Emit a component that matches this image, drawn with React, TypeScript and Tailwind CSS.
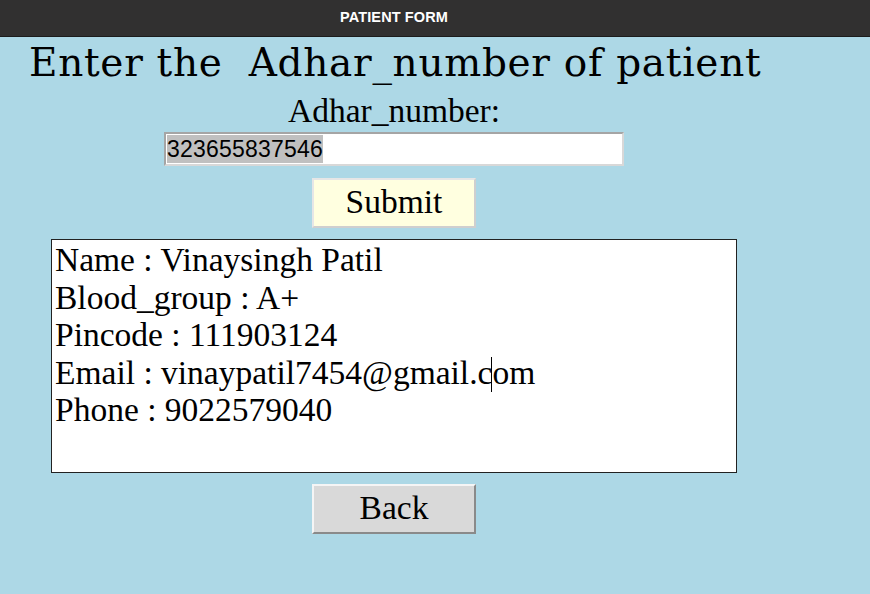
import React from "react";

export default function App() {
  const serif = { fontFamily: '"Liberation Serif", "Times New Roman", serif' };
  return (
    <div className="w-[870px] h-[594px] bg-[#add8e6] flex flex-col overflow-hidden">
      <div
        className="h-[37px] shrink-0 bg-[#313030] border-b border-[#1c1c1c] flex items-center justify-center pr-[82px] text-white font-bold text-[14.5px] tracking-[0.1px]"
        style={{ fontFamily: '"Liberation Sans", Arial, sans-serif' }}
      >
        PATIENT FORM
      </div>
      <div className="w-[788px] flex flex-col items-center text-black" style={serif}>
        <div
          className="self-start pl-[29px] pt-[4px] text-[39px] leading-[44px] tracking-[0.7px] whitespace-pre"
          style={{ fontFamily: '"DejaVu Serif", serif' }}
        >
          Enter the  Adhar_number of patient
        </div>
        <div className="text-[33.5px] leading-[38px] mt-[7px]">Adhar_number:</div>
        <div className="mt-[2px] w-[460px] h-[34px] bg-white border-2 border-[#a5a5a5] border-r-[#d8d8d8] border-b-[#d8d8d8] flex items-center px-px">
          <span
            className="bg-[#c0c0c0] text-[23px] leading-[28px] tracking-[0.2px]"
            style={{ fontFamily: '"Liberation Sans", Arial, sans-serif' }}
          >
            323655837546
          </span>
        </div>
        <button className="mt-[12px] w-[164px] h-[50px] bg-[#ffffe0] border-2 border-[#e6e6e6] border-r-[#cfcfcf] border-b-[#cfcfcf] text-[33.5px] leading-none pb-[2px]" style={serif}>
          Submit
        </button>
        <div className="mt-[11px] w-[686px] h-[234px] bg-white border border-[#222] pl-[3px] pt-[1px] text-[33.5px] leading-[37.6px]">
          <div>Name : Vinaysingh Patil</div>
          <div>Blood_group : A+</div>
          <div>Pincode : 111903124</div>
          <div>
            Email : vinaypatil7454@gmail.c
            <span className="relative inline-block w-0 h-0">
              <span className="absolute left-[-1px] top-[-27px] w-px h-[35px] bg-black" />
            </span>
            om
          </div>
          <div>Phone : 9022579040</div>
        </div>
        <button className="mt-[11px] w-[164px] h-[50px] bg-[#d9d9d9] border-2 border-[#f5f5f5] border-r-[#8a8a8a] border-b-[#8a8a8a] text-[33.5px] leading-none pb-[2px]" style={serif}>
          Back
        </button>
      </div>
    </div>
  );
}
